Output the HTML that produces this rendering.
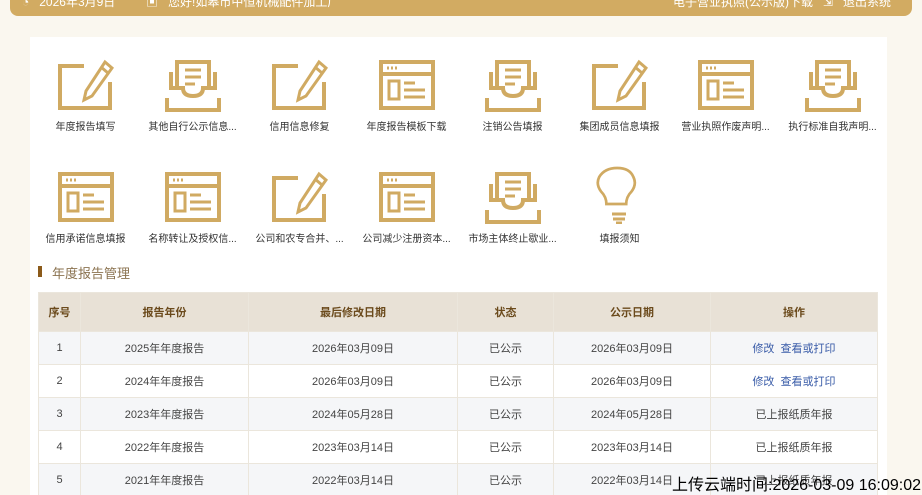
<!DOCTYPE html>
<html><head><meta charset="utf-8">
<style>
*{margin:0;padding:0;box-sizing:border-box}
html,body{width:922px;height:495px;overflow:hidden}
body{background:#faf7ef;font-family:"Liberation Sans","Noto Sans CJK SC",sans-serif;position:relative}
.hdr{position:absolute;left:10px;top:-10px;width:902px;height:26px;background:#d2ab62;border-radius:0 0 8px 8px;color:#fff;font-size:12px}
.hdr span{position:absolute;top:3px;white-space:nowrap}
.panel{position:absolute;left:30px;top:37px;width:857px;height:470px;background:#fff}
.it{position:absolute;width:107px;text-align:center;font-size:10px;color:#333}
.it svg{display:block;margin:0 auto}
.it div{margin-top:6px;white-space:nowrap}
.ttl{position:absolute;left:38px;top:263px;font-size:13px;color:#8b7350}
.ttl:before{content:"";position:absolute;left:0;top:3px;width:4px;height:11px;background:#8b5a1a}
.ttl span{margin-left:14px}
table{position:absolute;left:38px;top:292px;width:840px;border-collapse:collapse;font-size:11px;color:#444}
td,th{border:1px solid #ebe6dc;text-align:center;height:33px;background:#fff}
th{background:#e8e1d6;color:#6b4a1c;height:39px;font-weight:bold}
tr.g td{background:#f5f6f8}
.a{color:#3a5ca8}
.wm{position:absolute;left:672px;top:471px;font-size:16px;color:#000;white-space:nowrap}
</style></head><body>
<div class="hdr">
<span style="left:12px">◔ &nbsp;&nbsp;2026年3月9日</span>
<span style="left:136px">▣ &nbsp;&nbsp;您好!如皋市中恒机械配件加工厂</span>
<span style="left:663px">电子营业执照(公示版)下载 &nbsp;&nbsp;⇲ &nbsp;&nbsp;退出系统</span>
</div>
<div class="panel"></div>
<svg width="0" height="0" style="position:absolute">
<defs>
<g id="pen" fill="none" stroke="#d0aa62" stroke-width="4"><path d="M26 8H2V50H52V24"/><path d="M47 4L54 10 34 38 26 42 28 33Z" stroke-width="3"/><path d="M43 9l7 6" stroke-width="3"/></g>
<g id="tray" fill="none" stroke="#d0aa62" stroke-width="4"><path d="M12 30V4H44V30"/><path d="M20 12H36M20 19H36M20 26H30" stroke-width="3"/><path d="M6 14V30H18Q18 38 28 38Q38 38 38 30H50V14"/><path d="M2 40V52H54V40"/></g>
<g id="win" fill="none" stroke="#d0aa62" stroke-width="4"><rect x="2" y="4" width="52" height="46"/><path d="M2 16H54" /><path d="M8 10h2M12 10h2M16 10h2" stroke-width="3"/><rect x="10" y="23" width="10" height="18" stroke-width="3"/><path d="M25 25H36M25 32H46M25 39H46" stroke-width="3"/></g>
<g id="bulb" fill="none" stroke="#d0aa62" stroke-width="3"><path d="M16 40Q16 32 10 26Q4 18 8 10Q14 0 28 0Q42 0 46 10Q50 18 44 26Q38 32 38 40Z" transform="translate(0 2) scale(0.9)"/><path d="M20 48H34M21 53H33M24 57H30"/></g>
</defs></svg>
<div class="it" style="left:32px;top:58px"><svg width="56" height="54"><use href="#pen"/></svg><div>年度报告填写</div></div>
<div class="it" style="left:139px;top:58px"><svg width="56" height="54"><use href="#tray"/></svg><div>其他自行公示信息...</div></div>
<div class="it" style="left:246px;top:58px"><svg width="56" height="54"><use href="#pen"/></svg><div>信用信息修复</div></div>
<div class="it" style="left:353px;top:58px"><svg width="56" height="54"><use href="#win"/></svg><div>年度报告模板下载</div></div>
<div class="it" style="left:459px;top:58px"><svg width="56" height="54"><use href="#tray"/></svg><div>注销公告填报</div></div>
<div class="it" style="left:566px;top:58px"><svg width="56" height="54"><use href="#pen"/></svg><div>集团成员信息填报</div></div>
<div class="it" style="left:672px;top:58px"><svg width="56" height="54"><use href="#win"/></svg><div>营业执照作废声明...</div></div>
<div class="it" style="left:779px;top:58px"><svg width="56" height="54"><use href="#tray"/></svg><div>执行标准自我声明...</div></div>
<div class="it" style="left:32px;top:170px"><svg width="56" height="54"><use href="#win"/></svg><div>信用承诺信息填报</div></div>
<div class="it" style="left:139px;top:170px"><svg width="56" height="54"><use href="#win"/></svg><div>名称转让及授权信...</div></div>
<div class="it" style="left:246px;top:170px"><svg width="56" height="54"><use href="#pen"/></svg><div>公司和农专合并、...</div></div>
<div class="it" style="left:353px;top:170px"><svg width="56" height="54"><use href="#win"/></svg><div>公司减少注册资本...</div></div>
<div class="it" style="left:459px;top:170px"><svg width="56" height="54"><use href="#tray"/></svg><div>市场主体终止歇业...</div></div>
<div class="it" style="left:566px;top:166px"><svg width="56" height="58"><use href="#bulb"/></svg><div style="margin-top:6px">填报须知</div></div>
<div class="ttl"><span>年度报告管理</span></div>
<table>
<tr><th style="width:42px">序号</th><th style="width:168px">报告年份</th><th style="width:209px">最后修改日期</th><th style="width:96px">状态</th><th style="width:157px">公示日期</th><th>操作</th></tr>
<tr class="g"><td>1</td><td>2025年年度报告</td><td>2026年03月09日</td><td>已公示</td><td>2026年03月09日</td><td class="a">修改&nbsp; 查看或打印</td></tr>
<tr><td>2</td><td>2024年年度报告</td><td>2026年03月09日</td><td>已公示</td><td>2026年03月09日</td><td class="a">修改&nbsp; 查看或打印</td></tr>
<tr class="g"><td>3</td><td>2023年年度报告</td><td>2024年05月28日</td><td>已公示</td><td>2024年05月28日</td><td>已上报纸质年报</td></tr>
<tr><td>4</td><td>2022年年度报告</td><td>2023年03月14日</td><td>已公示</td><td>2023年03月14日</td><td>已上报纸质年报</td></tr>
<tr class="g"><td>5</td><td>2021年年度报告</td><td>2022年03月14日</td><td>已公示</td><td>2022年03月14日</td><td>已上报纸质年报</td></tr>
</table>
<div class="wm">上传云端时间:2026-03-09 16:09:02</div>
</body></html>
